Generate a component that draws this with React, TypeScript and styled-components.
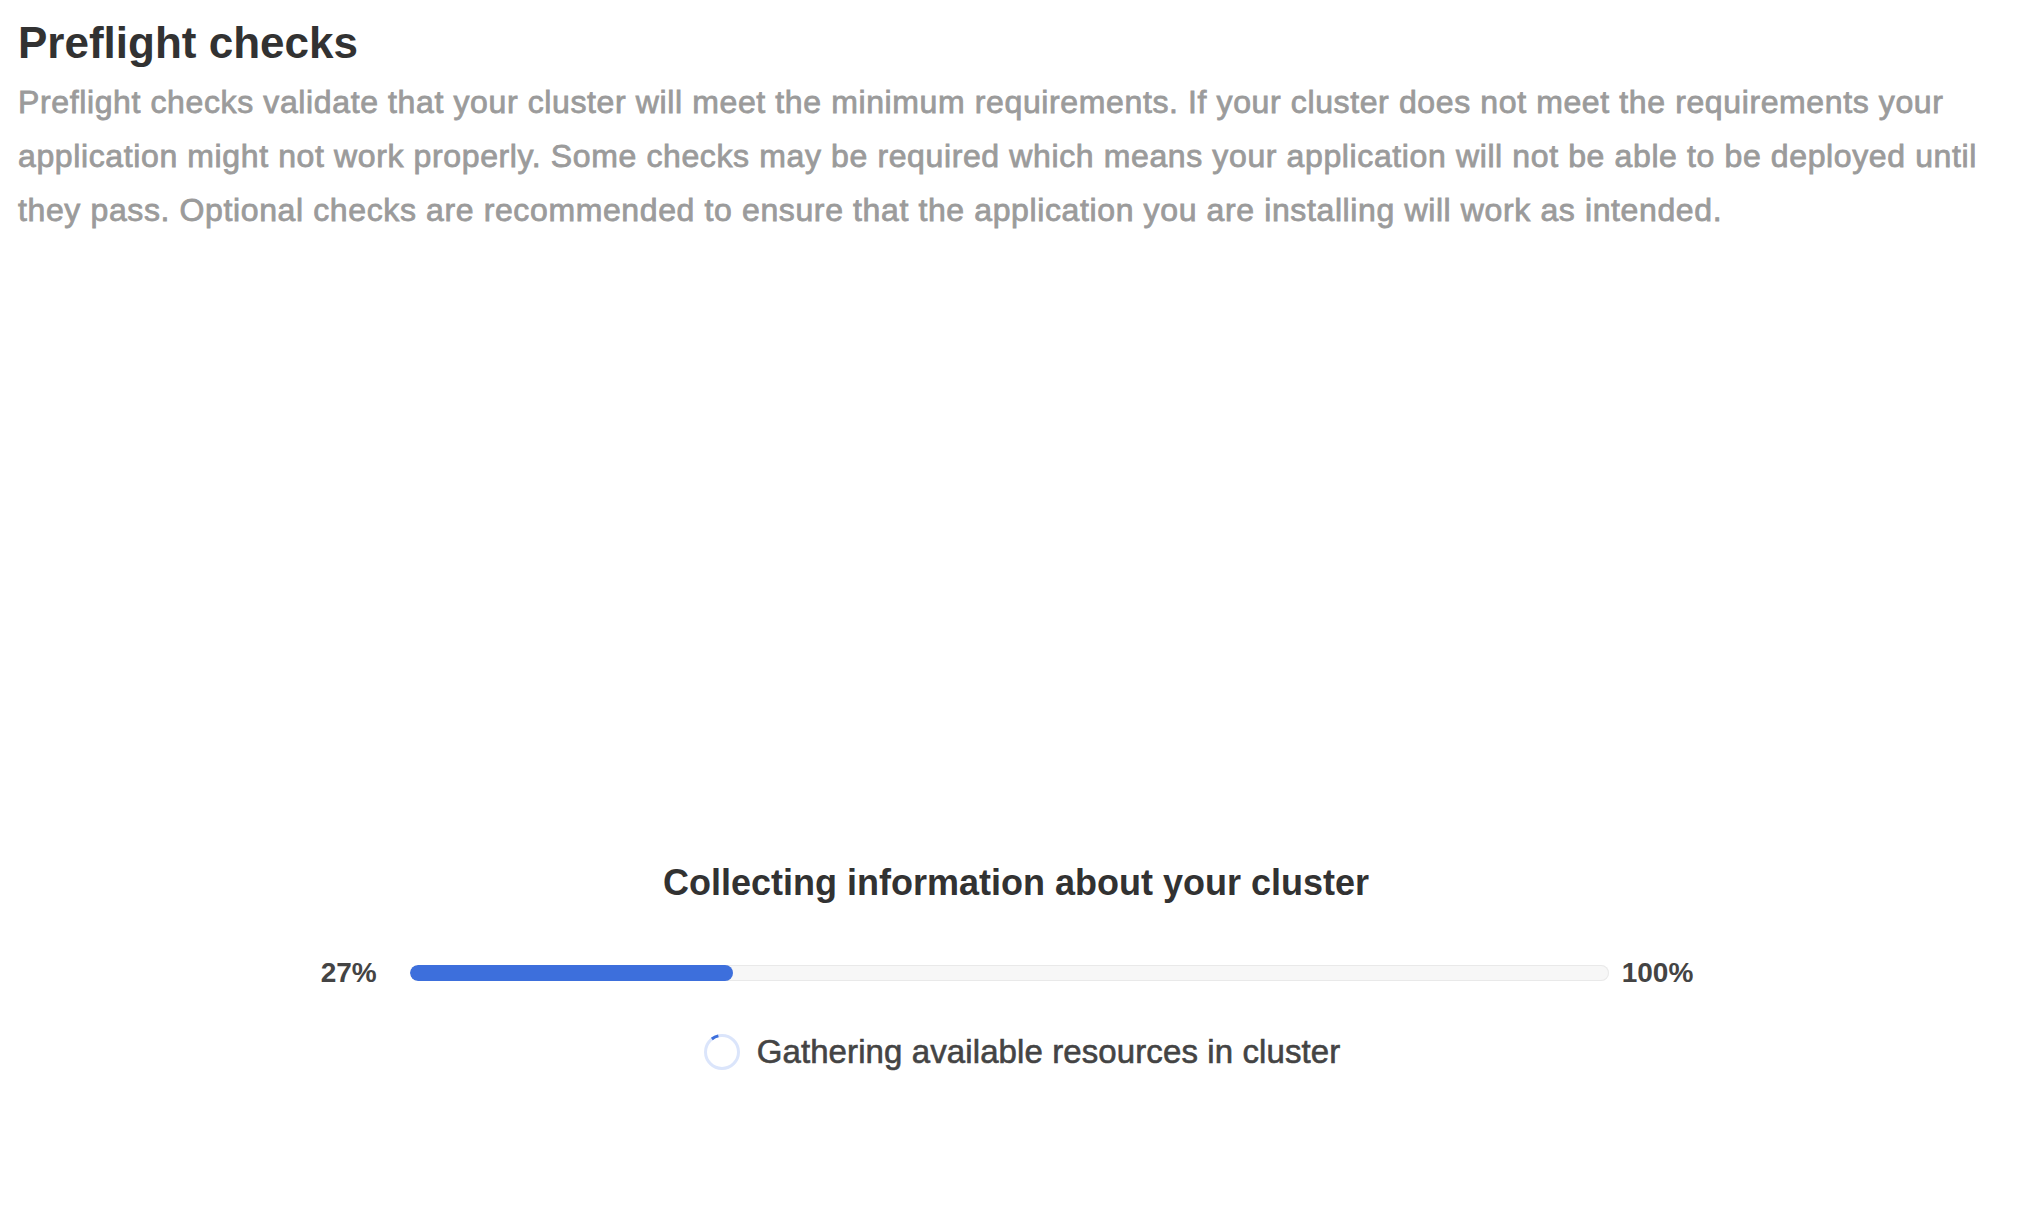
import React from "react";
import styled, { createGlobalStyle } from "styled-components";

const GlobalStyle = createGlobalStyle`
  html, body {
    margin: 0;
    padding: 0;
    background: #ffffff;
  }
  body {
    font-family: "Liberation Sans", Arial, Helvetica, sans-serif;
    -webkit-font-smoothing: antialiased;
  }
`;

const Page = styled.div`
  display: flex;
  flex-direction: column;
  padding: 17px 18px 0 18px;
  min-height: 1206px;
  box-sizing: border-box;
`;

const Title = styled.h1`
  margin: 0;
  font-size: 44px;
  line-height: 52px;
  font-weight: 700;
  color: #323232;
`;

const Description = styled.p`
  margin: 6px 0 0 0;
  font-size: 32px;
  line-height: 54px;
  font-weight: 400;
  letter-spacing: 0.62px;
  color: #9b9b9b;
  -webkit-text-stroke: 0.8px #9b9b9b;
`;

const ProgressSection = styled.section`
  display: flex;
  flex-direction: column;
  align-items: center;
  margin-top: 624px;
`;

const ProgressHeading = styled.h2`
  margin: 0;
  font-size: 36px;
  line-height: 44px;
  font-weight: 700;
  color: #323232;
`;

const ProgressRow = styled.div`
  display: flex;
  align-items: center;
  margin-top: 52px;
  padding-right: 18px;
  height: 32px;
`;

const PercentLabel = styled.span<{ $side: "left" | "right" }>`
  font-size: 28px;
  line-height: 32px;
  font-weight: 700;
  color: #444444;
  margin-right: ${(p) => (p.$side === "left" ? "33px" : "0")};
  margin-left: ${(p) => (p.$side === "right" ? "13px" : "0")};
`;

const Track = styled.div`
  width: 1199px;
  height: 16px;
  border-radius: 8px;
  background: #f7f7f7;
  box-shadow: inset 0 0 0 1px #e9e9e9;
  overflow: hidden;
  display: flex;
`;

const Fill = styled.div`
  height: 100%;
  background: #3d6fdc;
  border-radius: 8px;
`;

const StatusRow = styled.div`
  display: flex;
  align-items: center;
  gap: 17px;
  margin-top: 44px;
  padding-left: 12px;
`;

const SpinnerSvg = styled.svg`
  width: 36px;
  height: 36px;
  flex: none;
`;

const StatusText = styled.span`
  font-size: 33px;
  line-height: 36px;
  font-weight: 400;
  letter-spacing: 0.1px;
  color: #444444;
  padding-top: 1px;
  -webkit-text-stroke: 0.6px #444444;
`;

const Spinner: React.FC = () => {
  const r = 16.5;
  const c = 2 * Math.PI * r;
  const arc = c * 0.07;
  return (
    <SpinnerSvg viewBox="0 0 36 36">
      <circle cx="18" cy="18" r={r} fill="none" stroke="#dbe5fb" strokeWidth="3" />
      <circle
        cx="18"
        cy="18"
        r={r}
        fill="none"
        stroke="#3d6fdc"
        strokeWidth="3"
        strokeDasharray={`${arc} ${c}`}
        transform="rotate(-128 18 18)"
      />
    </SpinnerSvg>
  );
};

export default function App() {
  const percent = 27;
  return (
    <>
      <GlobalStyle />
      <Page>
        <Title>Preflight checks</Title>
        <Description>
          Preflight checks validate that your cluster will meet the minimum requirements. If your
          cluster does not meet the requirements your application might not work properly. Some
          checks may be required which means your application will not be able to be deployed
          until they pass. Optional checks are recommended to ensure that the application you are
          installing will work as intended.
        </Description>
        <ProgressSection>
          <ProgressHeading>Collecting information about your cluster</ProgressHeading>
          <ProgressRow>
            <PercentLabel $side="left">{percent}%</PercentLabel>
            <Track>
              <Fill style={{ width: `${percent}%` }} />
            </Track>
            <PercentLabel $side="right">100%</PercentLabel>
          </ProgressRow>
          <StatusRow>
            <Spinner />
            <StatusText>Gathering available resources in cluster</StatusText>
          </StatusRow>
        </ProgressSection>
      </Page>
    </>
  );
}
